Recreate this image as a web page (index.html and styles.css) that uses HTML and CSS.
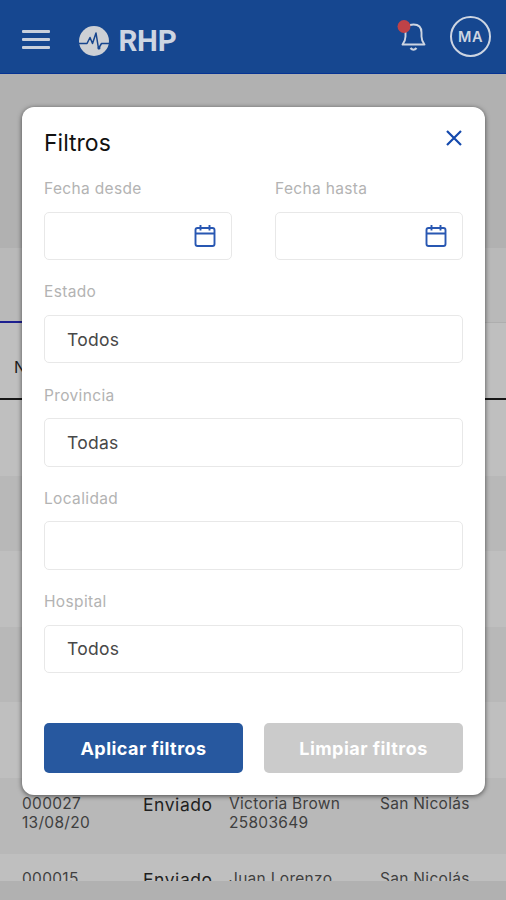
FILE: index.html
```html
<!DOCTYPE html>
<html lang="es">
<head>
<meta charset="utf-8">
<title>RHP – Filtros</title>
<link rel="stylesheet" href="styles.css">
</head>
<body>
<div class="app">
  <header class="topbar">
    <div class="menu"><span></span><span></span><span></span></div>
    <svg class="logo" viewBox="0 0 30 30"><circle cx="15" cy="15" r="15" fill="#cdd0d5"/><path d="M0 17.500H8L11 11.500L13.500 17.500L17 7L19.500 22.500L22.500 17.500H30" fill="none" stroke="#17458e" stroke-width="1.5" stroke-linejoin="round"/><circle cx="20" cy="22" r="1.500" fill="#17458e"/></svg>
    <span class="brand">RHP</span>
    <svg class="bell" viewBox="0 0 32 34"><path d="M5.500 25.500H27.500C25.500 23 24.500 21 24.500 17.500V13.500C24.500 8.500 21.500 5.500 16.500 5.500S8.500 8.500 8.500 13.500V17.500C8.500 21 7.500 23 5.500 25.500Z" fill="none" stroke="#cdd5e2" stroke-width="1.9" stroke-linejoin="round"/><path d="M13.500 29Q16.500 32.500 19.500 29" fill="none" stroke="#cdd5e2" stroke-width="2.2"/><circle cx="7" cy="7.500" r="6.500" fill="#bf4247"/></svg>
    <span class="avatar">MA</span>
  </header>
  <div class="heading"></div>
  <div class="tabs"><span class="tab-active"></span></div>
  <div class="thead">N°</div>
  <div class="row"></div>
  <div class="row alt"></div>
  <div class="row"></div>
  <div class="row alt"></div>
  <div class="row"></div>
  <div class="row alt"><span>000027<br>13/08/20</span><b>Enviado</b><span>Victoria Brown<br>25803649</span><span>San Nicolás</span></div>
  <div class="row last"><span>000015</span><b>Enviado</b><span>Juan Lorenzo</span><span>San Nicolás</span></div>
  <div class="footer"></div>
</div>
<section class="modal">
  <div class="modal-head">
    <h1>Filtros</h1>
    <svg class="close" viewBox="0 0 16 16"><path d="M1 1L15 15M15 1L1 15" stroke="#1449ad" stroke-width="2.2"/></svg>
  </div>
  <div class="dates">
    <div class="field"><label>Fecha desde</label><div class="input date"><svg class="calendar" viewBox="0 0 22 24"><path d="M3.500 4H18.500Q20.500 4 20.500 6V20Q20.500 22 18.500 22H3.500Q1.500 22 1.500 20V6Q1.500 4 3.500 4ZM1.500 9.500H20.500M6.500 1V6.500M15.500 1V6.500" fill="none" stroke="#2857b2" stroke-width="1.900"/></svg></div></div>
    <div class="field"><label>Fecha hasta</label><div class="input date"><svg class="calendar" viewBox="0 0 22 24"><path d="M3.500 4H18.500Q20.500 4 20.500 6V20Q20.500 22 18.500 22H3.500Q1.500 22 1.500 20V6Q1.500 4 3.500 4ZM1.500 9.500H20.500M6.500 1V6.500M15.500 1V6.500" fill="none" stroke="#2857b2" stroke-width="1.900"/></svg></div></div>
  </div>
  <div class="field"><label>Estado</label><div class="input">Todos</div></div>
  <div class="field"><label>Provincia</label><div class="input">Todas</div></div>
  <div class="field"><label>Localidad</label><div class="input"></div></div>
  <div class="field"><label>Hospital</label><div class="input">Todos</div></div>
  <div class="actions"><button class="apply">Aplicar filtros</button><button class="clear">Limpiar filtros</button></div>
</section>
</body>
</html>
```
FILE: styles.css
```css
* { box-sizing: border-box; }
body { margin: 0; font-family: Inter, Roboto, sans-serif; }
.app { height: 900px; overflow: hidden; background: #bfbfbf; }
.topbar { height: 74px; background: #164790; border-bottom: 1px solid #063393; display: flex; align-items: center; padding: 5px 15px 0 22px; }
.menu { width: 28px; display: flex; flex-direction: column; gap: 5px; }
.menu span { height: 3px; border-radius: 1px; background: #c9d0dc; }
.logo { width: 30px; height: 30px; margin-left: 28.500px; margin-top: 4px; }
.brand { margin-left: 10px; margin-top: 4px; font: 700 29.500px Roboto, sans-serif; letter-spacing: -.3px; color: #cdd5e2; }
.bell { width: 32px; height: 34px; margin-left: auto; margin-top: -6px; }
.avatar { width: 41px; height: 41px; margin: -5px 0 0 21px; border: 2.5px solid #cdd5e2; border-radius: 50%; display: flex; align-items: center; justify-content: center; font-size: 14.500px; font-weight: 600; letter-spacing: .6px; color: #cdd5e2; }
.heading { height: 174px; background: #b1b1b1; }
.tabs { height: 75px; background: #b9b9b9; border-bottom: 1px solid #aeaeae; display: flex; align-items: flex-end; }
.tab-active { width: 160px; height: 2px; background: #1d2090; margin-bottom: -1px; }
.thead { height: 77px; border-bottom: 2px solid #171717; padding: 34px 14px 0; font-size: 16px; line-height: 20px; font-weight: 400; color: #1c1c1c; }
.row { height: 75.6px; padding: 16px 0 0 22px; display: grid; grid-template-columns: 121px 86px 151px 1fr; font-size: 15.5px; line-height: 19px; letter-spacing: .3px; color: #3f3f3f; }
.row b { font-size: 17.500px; font-weight: 400; line-height: 21px; letter-spacing: .55px; color: #1f1f1f; }
.alt { background: #b8b8b8; }
.row.last { height: 27.4px; padding-top: 15px; overflow: hidden; }
.footer { height: 20px; background: #b1b1b1; }
.modal { position: absolute; left: 22px; top: 107px; width: 463px; height: 688px; padding: 21px 22px 0; border-radius: 12px; background: #fff; box-shadow: 0 1px 5px rgba(0,0,0,.6); }
.modal-head { height: 47px; display: flex; justify-content: space-between; }
h1 { margin: 0; font-size: 23px; line-height: 31px; font-weight: 400; color: #111; }
.close { width: 16px; height: 16px; margin: 2px 1px 0 0; }
.dates { display: grid; grid-template-columns: 188px 188px; gap: 43px; }
.field { height: 103.3px; padding-top: 3px; }
label { display: block; height: 33.500px; font-size: 15.5px; line-height: 21px; letter-spacing: .35px; color: #b3b3b3; }
.input { height: 48.500px; border: 1.5px solid #e8e8e8; border-radius: 5px; display: flex; align-items: center; padding: 0 22px; font-size: 17.500px; letter-spacing: .25px; color: #484848; }
.date { justify-content: flex-end; padding-right: 15px; }
.calendar { width: 22px; height: 24px; }
.actions { display: flex; gap: 21px; margin-top: 32px; }
button { flex: 1; height: 50px; border: 0; border-radius: 5px; padding: 0; color: #fff; font: 700 18px Inter, sans-serif; letter-spacing: .45px; }
.apply { background: #27589f; }
.clear { background: #cbcbcb; }
```
